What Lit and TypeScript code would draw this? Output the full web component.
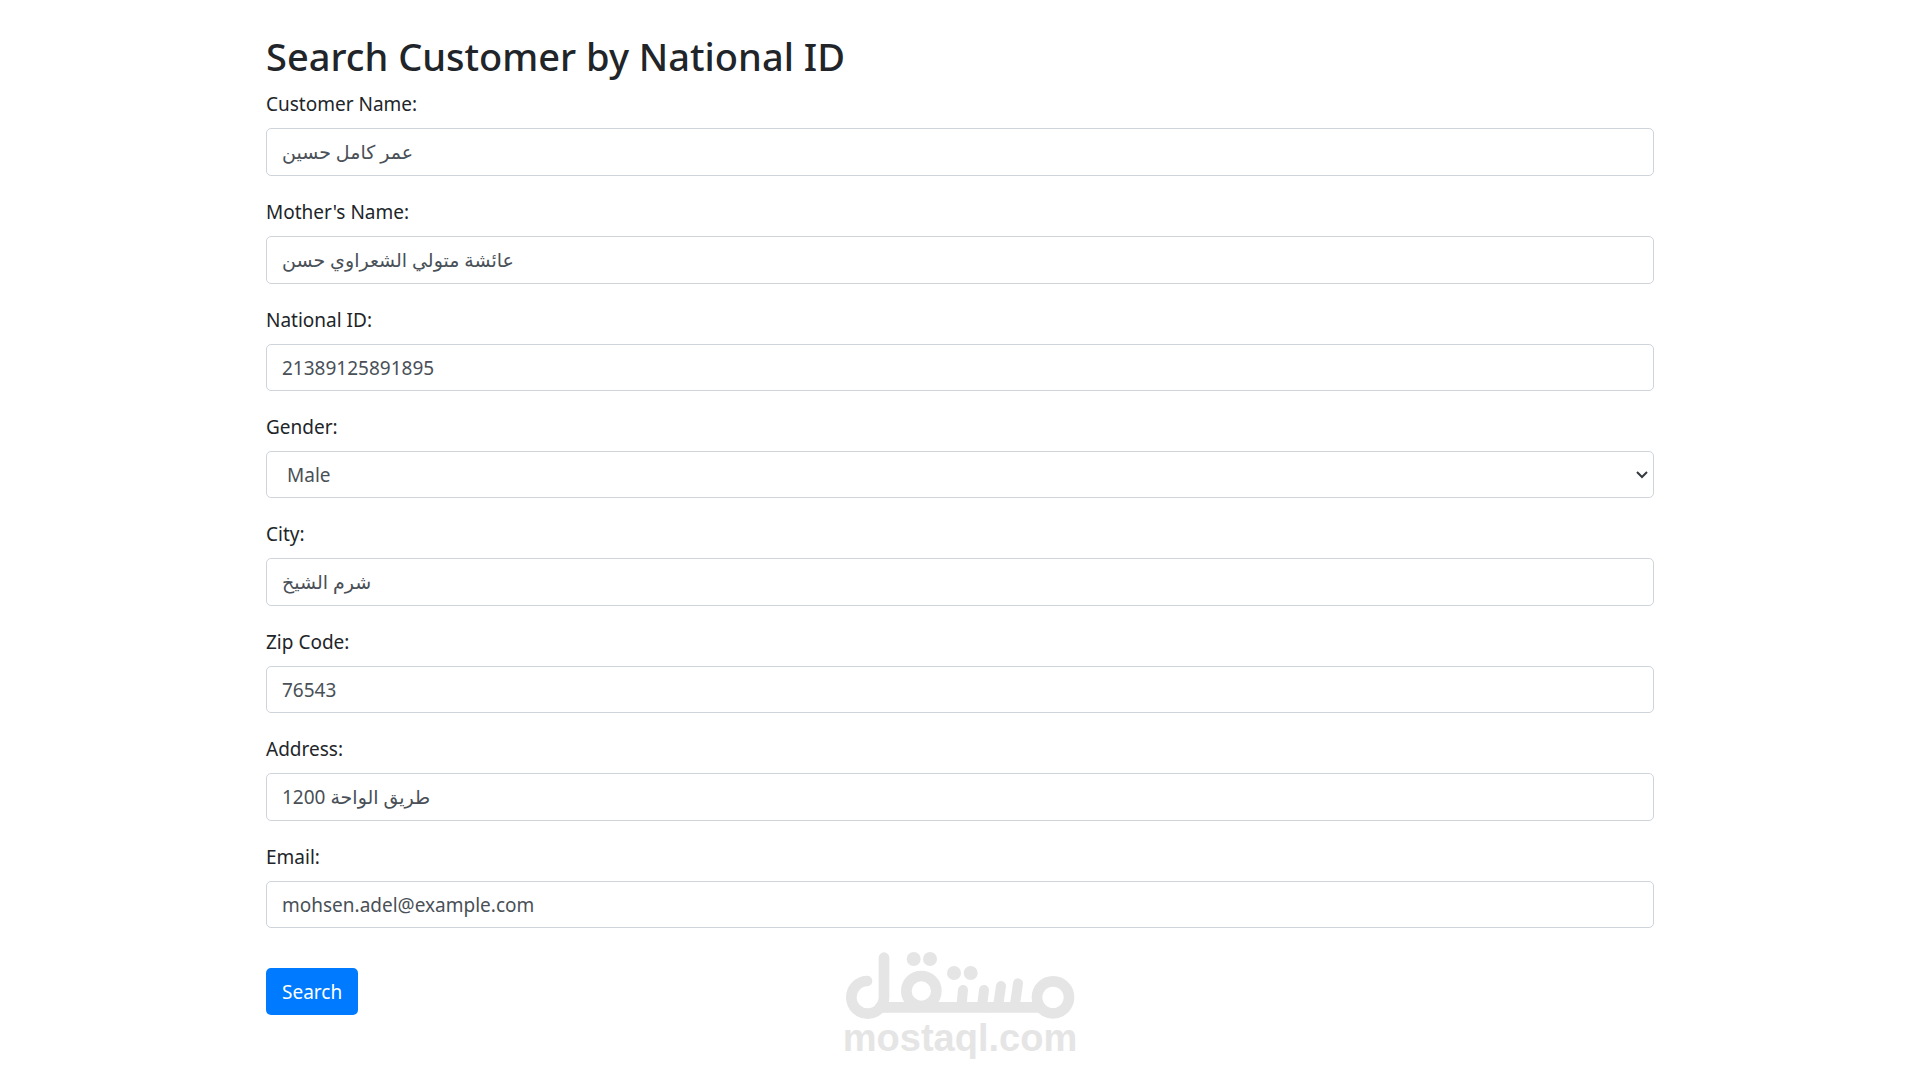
import { LitElement, html, css } from "lit";
import { customElement, state } from "lit/decorators.js";

interface Field {
  id: string;
  label: string;
  value: string;
  type: "text" | "email" | "select";
  lang?: string;
  options?: string[];
}

const FIELDS: Field[] = [
  { id: "name", label: "Customer Name:", value: "عمر كامل حسين", type: "text", lang: "ar" },
  { id: "mother", label: "Mother's Name:", value: "عائشة متولي الشعراوي حسن", type: "text", lang: "ar" },
  { id: "national-id", label: "National ID:", value: "21389125891895", type: "text" },
  { id: "gender", label: "Gender:", value: "Male", type: "select", options: ["Male", "Female"] },
  { id: "city", label: "City:", value: "شرم الشيخ", type: "text", lang: "ar" },
  { id: "zip", label: "Zip Code:", value: "76543", type: "text" },
  { id: "address", label: "Address:", value: "1200 طريق الواحة", type: "text", lang: "ar" },
  { id: "email", label: "Email:", value: "mohsen.adel@example.com", type: "email" },
];

@customElement("site-watermark")
export class SiteWatermark extends LitElement {
  static styles = css`
    :host {
      display: flex;
      flex-direction: column;
      align-items: center;
      color: #e5e5e5;
    }
    .mark {
      display: block;
      width: 230px;
      height: 68px;
    }
    .stroke {
      fill: none;
      stroke: currentColor;
      stroke-width: 32;
      stroke-linecap: round;
    }
    .thin {
      stroke-width: 30;
    }
    .dot {
      fill: currentColor;
    }
    .name {
      font: bold 38px/36px "Liberation Sans", Arial, sans-serif;
    }
  `;

  render() {
    return html`
      <svg class="mark" viewBox="45 36 690 204" role="img" aria-label="مستقل">
        <path class="stroke" d="M111 123 A49 49 0 1 0 162 172 V53" />
        <path class="stroke" d="M150 202 H630" />
        <circle class="stroke" cx="274" cy="153" r="45" />
        <circle class="stroke" cx="669" cy="172" r="48" />
        <path class="stroke thin" d="M399 150 L394 200 M462 150 L456 200 M513 138 L504 200 M564 130 L554 200" />
        <circle class="dot" cx="251" cy="57" r="21" />
        <circle class="dot" cx="300" cy="57" r="21" />
        <circle class="dot" cx="372" cy="99" r="21" />
        <circle class="dot" cx="422" cy="99" r="21" />
      </svg>
      <span class="name">mostaql.com</span>
    `;
  }
}

@customElement("app-root")
export class AppRoot extends LitElement {
  static styles = css`
    :host {
      display: block;
      position: relative;
      min-height: 100vh;
      box-sizing: border-box;
      background: #fff;
      color: #212529;
      font: 19px/30px "Noto Sans", "Open Sans", "DejaVu Sans", sans-serif;
    }
    .container {
      box-sizing: border-box;
      max-width: 1426px;
      margin: 0 auto;
      padding: 32px 19px;
    }
    .title {
      margin: 0 0 9px;
      font-size: 38px;
      line-height: 48px;
      font-weight: 500;
    }
    .form {
      display: flex;
      flex-direction: column;
      align-items: flex-start;
      gap: 21px;
    }
    .field {
      display: flex;
      flex-direction: column;
      gap: 9px;
      width: 100%;
    }
    .control {
      box-sizing: border-box;
      width: 100%;
      height: 47px;
      margin: 0;
      padding: 0 15px;
      border: 1px solid #ced4da;
      border-radius: 5px;
      background: #fff;
      color: #495057;
      font: inherit;
    }
    .control:lang(ar) {
      height: 48px;
    }
    .select-wrap {
      display: grid;
      align-items: center;
    }
    .select-wrap > * {
      grid-area: 1 / 1;
    }
    .select {
      appearance: none;
      padding: 0 36px 0 20px;
    }
    .chevron {
      justify-self: end;
      width: 12px;
      height: 8px;
      margin-right: 6px;
      pointer-events: none;
      fill: none;
      stroke: #343a40;
      stroke-width: 2;
    }
    .submit {
      margin: 19px 0 0;
      height: 47px;
      padding: 0 16px;
      border: 0;
      border-radius: 5px;
      background: #007bff;
      color: #fff;
      font: inherit;
      cursor: pointer;
    }
    .watermark {
      position: absolute;
      inset: auto 0 24px;
      pointer-events: none;
    }
  `;

  @state() private values: Record<string, string> = Object.fromEntries(
    FIELDS.map((f) => [f.id, f.value]),
  );

  private setValue(id: string, e: Event) {
    this.values = { ...this.values, [id]: (e.target as HTMLInputElement).value };
  }

  private control(f: Field) {
    if (f.type === "select") {
      return html`<div class="select-wrap">
        <select class="control select" id=${f.id} @change=${(e: Event) => this.setValue(f.id, e)}>
          ${f.options!.map((o) => html`<option ?selected=${o === this.values[f.id]}>${o}</option>`)}
        </select>
        <svg class="chevron" viewBox="0 0 12 8" aria-hidden="true"><path d="M1 1 L6 6 L11 1" /></svg>
      </div>`;
    }
    return html`<input
      class="control"
      id=${f.id}
      type=${f.type}
      lang=${f.lang ?? "en"}
      .value=${this.values[f.id]}
      @input=${(e: Event) => this.setValue(f.id, e)}
    />`;
  }

  render() {
    return html`
      <main class="container">
        <h2 class="title">Search Customer by National ID</h2>
        <form class="form" @submit=${(e: Event) => e.preventDefault()}>
          ${FIELDS.map(
            (f) => html`<div class="field">
              <label for=${f.id}>${f.label}</label>
              ${this.control(f)}
            </div>`,
          )}
          <button class="submit" type="submit">Search</button>
        </form>
      </main>
      <site-watermark class="watermark"></site-watermark>
    `;
  }
}
